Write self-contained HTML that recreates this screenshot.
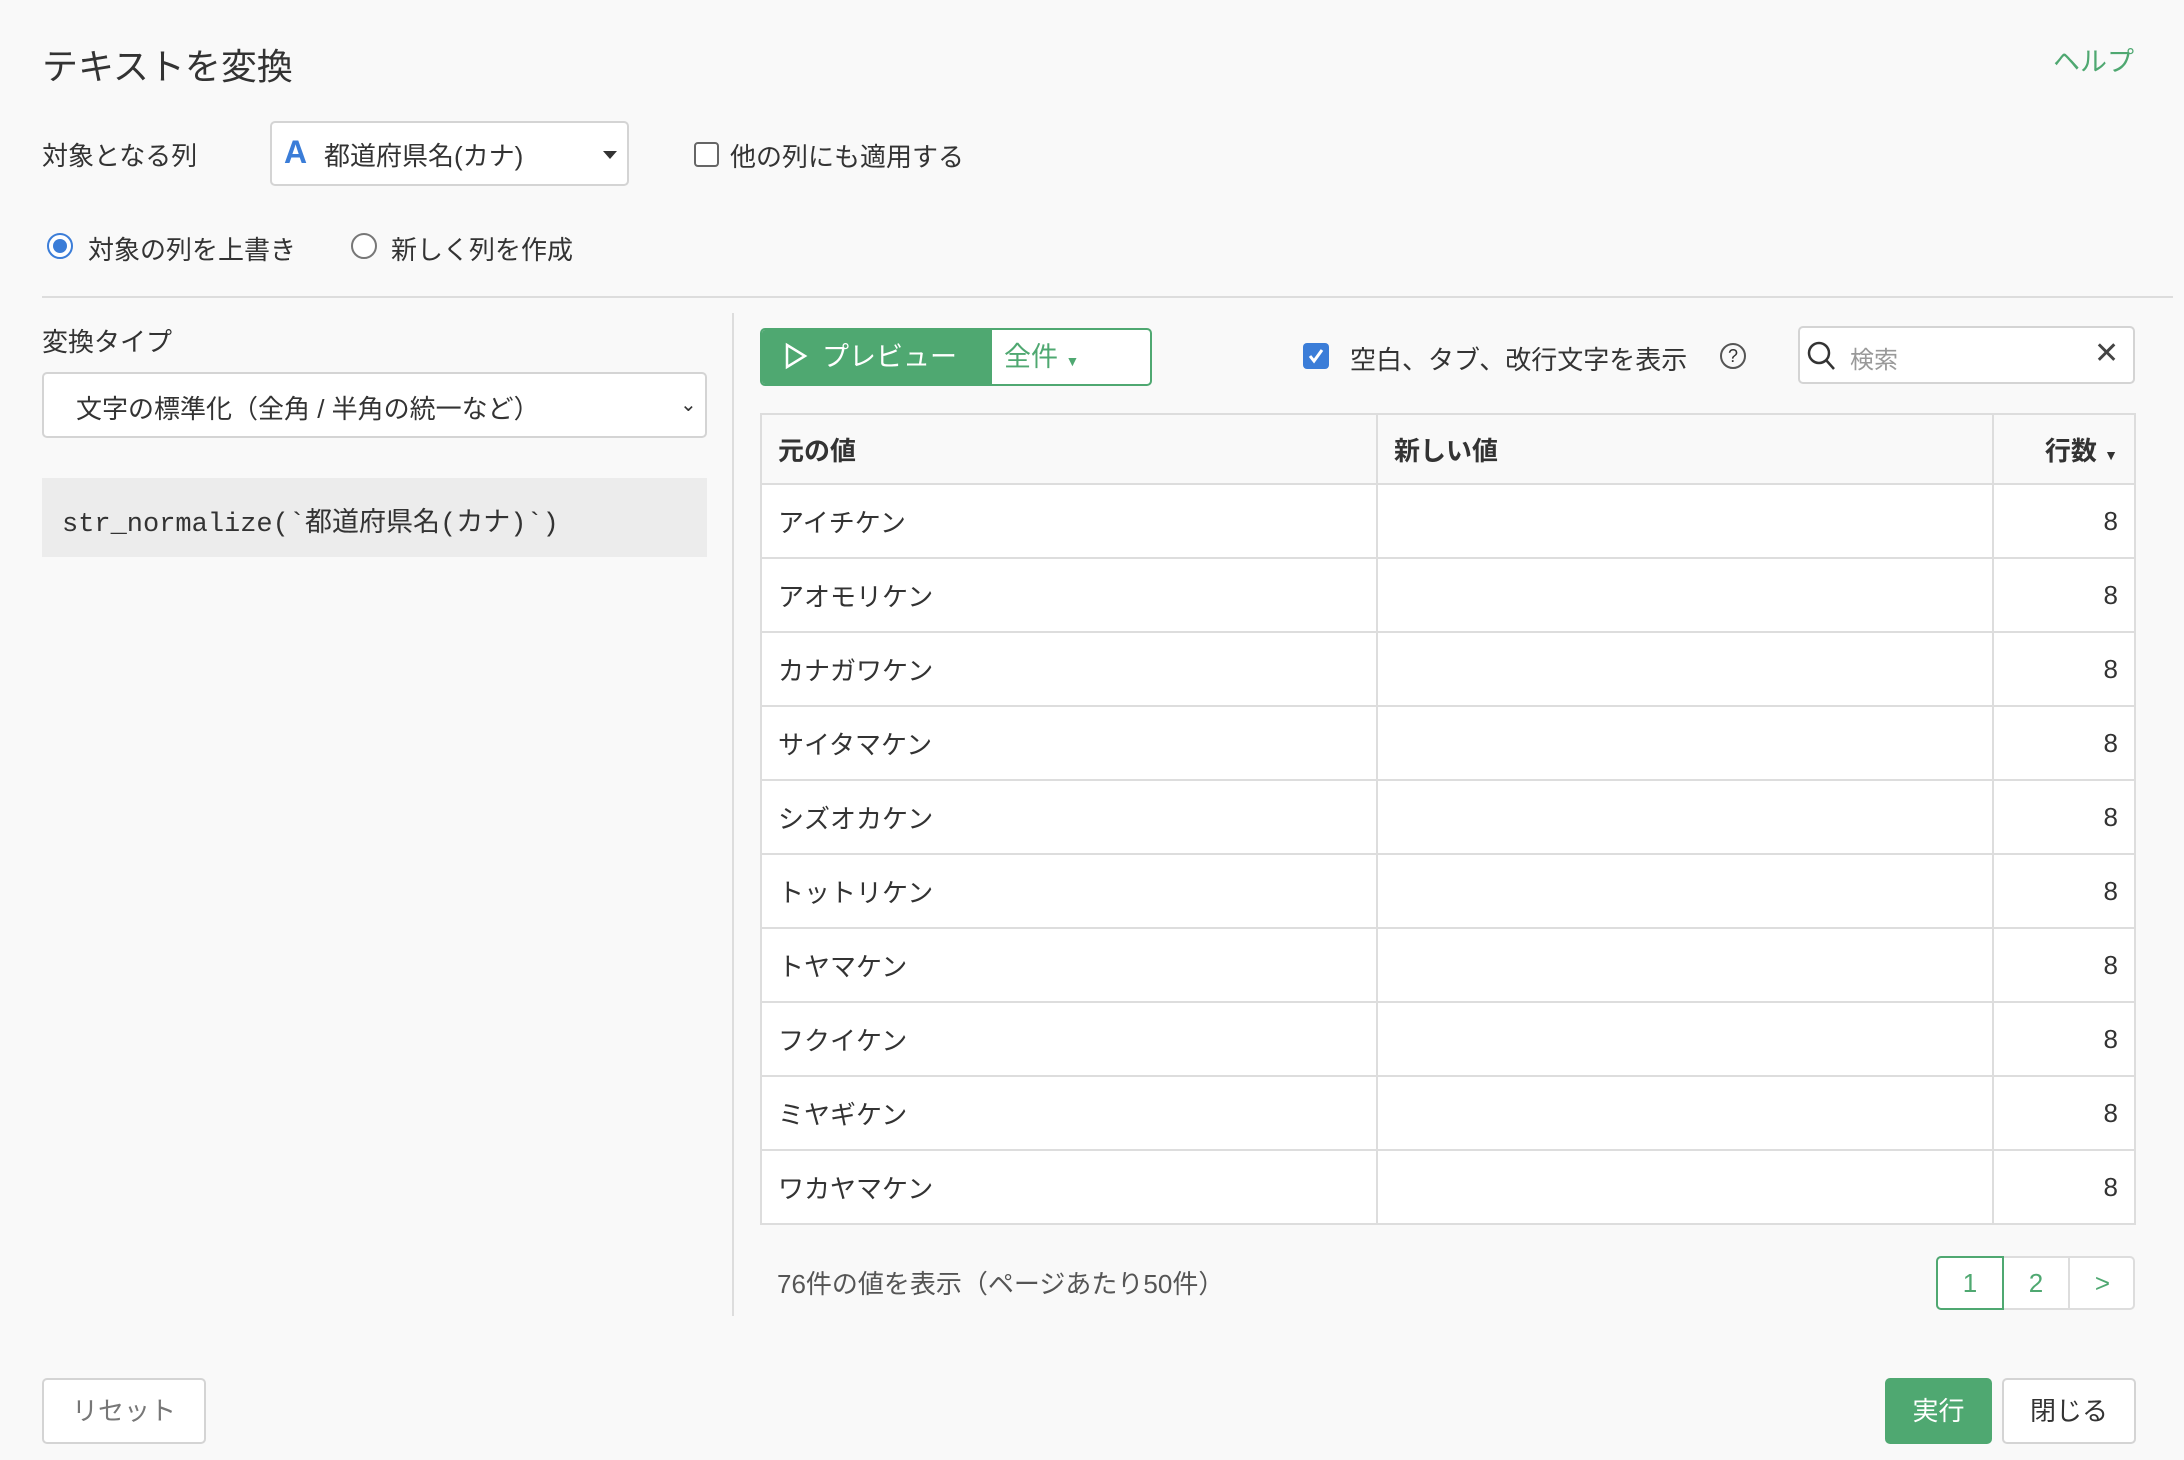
<!DOCTYPE html>
<html><head><meta charset="utf-8"><style>
*{box-sizing:border-box;margin:0;padding:0}
body{width:2184px;height:1460px;background:#f9f9f9;font-family:"Liberation Sans","Noto Sans CJK JP",sans-serif;color:#333;position:relative;overflow:hidden;font-size:26px}
.a{position:absolute}
.green{color:#4fa871}
.box{background:#fff;border:2px solid #d4d4d4;border-radius:5px}
table{border-collapse:collapse;position:absolute;left:760px;top:413px;width:1376px;background:#fff}
td,th{border:2px solid #ddd;height:74px;font-size:26px;padding:0 16px;text-align:left;font-weight:normal}
th{height:70px;background:#f9f9f9;font-weight:bold}
td.n,th.n{text-align:right}
.cb{width:25px;height:25px;border:2px solid #666;border-radius:4px;background:#fff}
</style></head><body>
<div class="a" style="left:42px;top:38px;font-size:36px;color:#333">テキストを変換</div>
<div class="a green" style="left:2053px;top:40px;font-size:27px">ヘルプ</div>

<div class="a" style="left:42px;top:136px">対象となる列</div>
<div class="a box" style="left:270px;top:121px;width:359px;height:65px"></div>
<div class="a" style="left:284px;top:134px;font-size:32px;font-weight:bold;color:#3b7dd8">A</div>
<div class="a" style="left:324px;top:136px">都道府県名(カナ)</div>
<div class="a" style="left:603px;top:151px;width:0;height:0;border-left:7px solid transparent;border-right:7px solid transparent;border-top:8px solid #333"></div>
<div class="a cb" style="left:694px;top:142px"></div>
<div class="a" style="left:730px;top:137px">他の列にも適用する</div>

<div class="a" style="left:47px;top:233px;width:26px;height:26px;border-radius:50%;border:2px solid #3b7dd8;background:#fff"><div style="margin:4px;width:14px;height:14px;border-radius:50%;background:#3b7dd8"></div></div>
<div class="a" style="left:88px;top:230px">対象の列を上書き</div>
<div class="a" style="left:351px;top:233px;width:26px;height:26px;border-radius:50%;border:2px solid #777;background:#fff"></div>
<div class="a" style="left:391px;top:230px">新しく列を作成</div>

<div class="a" style="left:42px;top:296px;width:2131px;height:2px;background:#ddd"></div>
<div class="a" style="left:732px;top:313px;width:2px;height:1003px;background:#ddd"></div>

<div class="a" style="left:42px;top:322px">変換タイプ</div>
<div class="a box" style="left:42px;top:372px;width:665px;height:66px"></div>
<div class="a" style="left:76px;top:389px">文字の標準化（全角 / 半角の統一など）</div>
<div class="a" style="left:680px;top:392px;font-size:20px">&#8964;</div>
<div class="a" style="left:42px;top:478px;width:665px;height:79px;background:#ececec"></div>
<div class="a" style="left:62px;top:500px;font-family:'Liberation Mono','Noto Sans CJK JP',monospace;font-size:27px">str_normalize(`都道府県名(カナ)`)</div>

<div class="a" style="left:760px;top:328px;width:392px;height:58px;border:2px solid #4fa871;border-radius:5px;background:#fff;overflow:hidden">
 <div style="position:absolute;left:0;top:0;width:230px;height:100%;background:#4fa871;color:#fff;font-size:27px;line-height:54px;padding-left:22px">
  <svg width="24" height="28" viewBox="0 0 24 28" style="vertical-align:-4px;margin-right:14px"><path d="M3 3 L21 14 L3 25 Z" fill="none" stroke="#fff" stroke-width="2.5"/></svg>プレビュー</div>
 <div style="position:absolute;left:242px;top:0;line-height:54px;color:#4fa871;font-size:27px">全件 <span style="font-size:14px">▼</span></div>
</div>

<div class="a" style="left:1303px;top:343px;width:26px;height:26px;border-radius:4px;background:#3b7dd8"><svg width="26" height="26"><path d="M7 13 L11 18 L19 7" stroke="#fff" stroke-width="3" fill="none"/></svg></div>
<div class="a" style="left:1350px;top:340px">空白、タブ、改行文字を表示</div>
<div class="a" style="left:1720px;top:343px;width:26px;height:26px;border:2px solid #555;border-radius:50%;font-size:18px;text-align:center;line-height:22px">?</div>

<div class="a box" style="left:1798px;top:326px;width:337px;height:58px"></div>
<svg class="a" style="left:1806px;top:340px" width="32" height="32"><circle cx="13" cy="13" r="10" stroke="#333" stroke-width="2.5" fill="none"/><path d="M20 20 L28 29" stroke="#333" stroke-width="2.5"/></svg>
<div class="a" style="left:1850px;top:340px;color:#999;font-size:24px">検索</div>
<div class="a" style="left:2094px;top:336px;font-size:30px;color:#444">✕</div>

<table>
<tr><th style="width:616px">元の値</th><th style="width:616px">新しい値</th><th class="n">行数 <span style="font-size:14px">▼</span></th></tr>
<tr><td>アイチケン</td><td></td><td class="n">8</td></tr>
<tr><td>アオモリケン</td><td></td><td class="n">8</td></tr>
<tr><td>カナガワケン</td><td></td><td class="n">8</td></tr>
<tr><td>サイタマケン</td><td></td><td class="n">8</td></tr>
<tr><td>シズオカケン</td><td></td><td class="n">8</td></tr>
<tr><td>トットリケン</td><td></td><td class="n">8</td></tr>
<tr><td>トヤマケン</td><td></td><td class="n">8</td></tr>
<tr><td>フクイケン</td><td></td><td class="n">8</td></tr>
<tr><td>ミヤギケン</td><td></td><td class="n">8</td></tr>
<tr><td>ワカヤマケン</td><td></td><td class="n">8</td></tr>
</table>

<div class="a" style="left:777px;top:1264px;color:#555">76件の値を表示（ページあたり50件）</div>
<div class="a" style="left:1936px;top:1256px;width:199px;height:54px;background:#fff;border:2px solid #ddd;border-radius:5px"></div>
<div class="a green" style="left:1936px;top:1256px;width:68px;height:54px;border:2px solid #4fa871;border-radius:5px 0 0 5px;text-align:center;line-height:50px">1</div>
<div class="a green" style="left:2004px;top:1256px;width:66px;height:54px;border-right:2px solid #ddd;text-align:center;line-height:54px">2</div>
<div class="a green" style="left:2070px;top:1256px;width:65px;height:54px;text-align:center;line-height:54px">&gt;</div>

<div class="a box" style="left:42px;top:1378px;width:164px;height:66px;text-align:center;line-height:62px;color:#777">リセット</div>
<div class="a" style="left:1885px;top:1378px;width:107px;height:66px;background:#4fa871;border-radius:5px;color:#fff;text-align:center;line-height:66px">実行</div>
<div class="a box" style="left:2002px;top:1378px;width:134px;height:66px;text-align:center;line-height:62px">閉じる</div>
</body></html>
